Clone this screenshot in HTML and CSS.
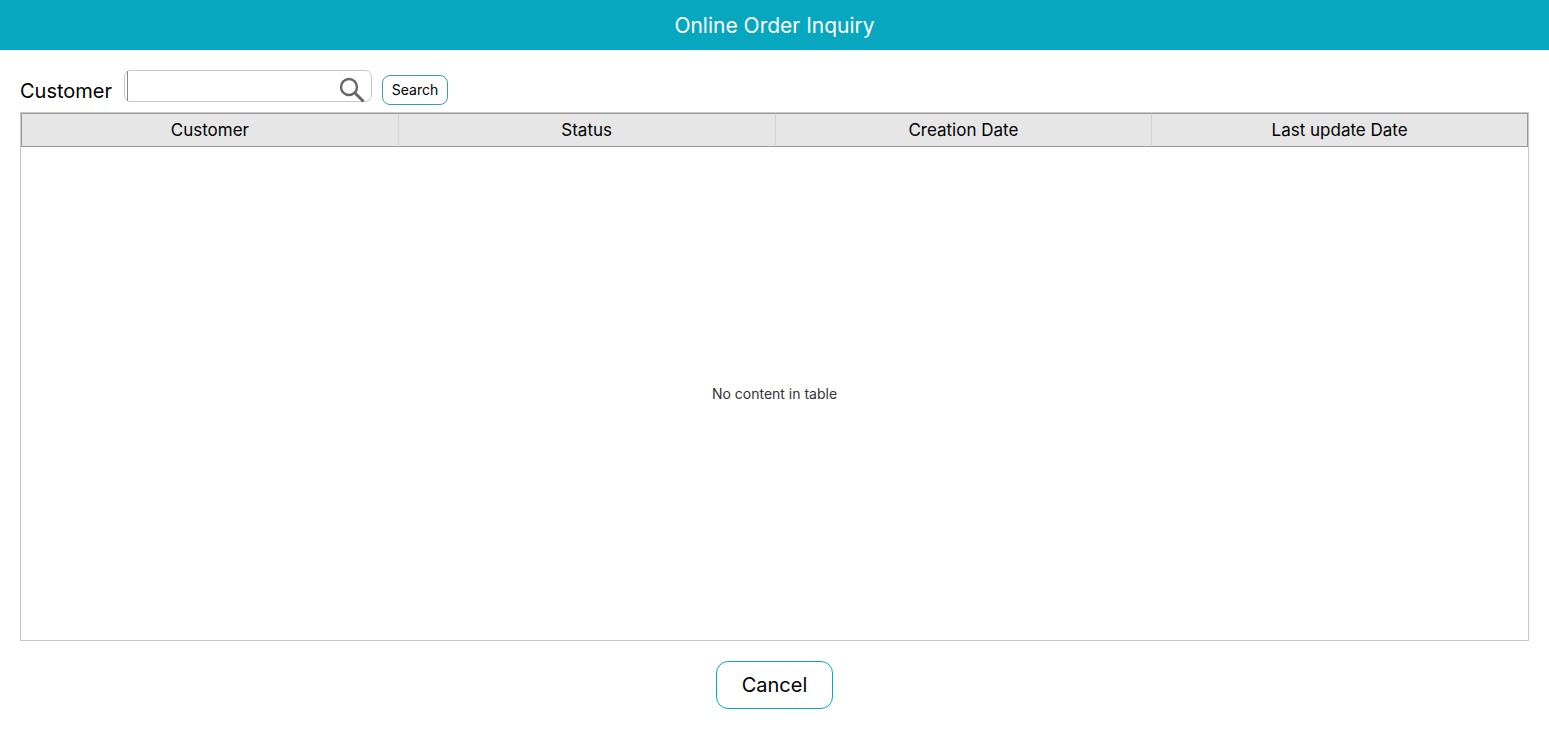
FILE: index.html
```html
<!DOCTYPE html>
<html lang="en">
<head>
    <meta charset="utf-8">
    <title>Online Order Inquiry</title>
    <link rel="stylesheet" href="styles.css">
</head>
<body>
    <header class="title-bar">
        <h1>Online Order Inquiry</h1>
    </header>

    <main class="content">
        <form class="search-row">
            <label for="customer">Customer</label>
            <div class="lookup">
                <input type="text" id="customer" name="customer">
                <button type="button" class="lookup-btn" aria-label="Look up customer">
                    <svg width="26" height="26" viewBox="0 0 26 26" fill="none" stroke="#666">
                        <circle cx="10" cy="10" r="8" stroke-width="2.4"/>
                        <path d="M15.5 15.5L24.5 24.5" stroke-width="3"/>
                    </svg>
                </button>
            </div>
            <button type="submit" class="search-btn">Search</button>
        </form>

        <div class="table-box">
            <table class="orders">
                <thead>
                    <tr>
                        <th>Customer</th>
                        <th>Status</th>
                        <th>Creation Date</th>
                        <th>Last update Date</th>
                    </tr>
                </thead>
                <tbody>
                    <tr>
                        <td colspan="4">No content in table</td>
                    </tr>
                </tbody>
            </table>
        </div>

        <button type="button" class="cancel-btn">Cancel</button>
    </main>
</body>
</html>
```
FILE: styles.css
```css
* { box-sizing: border-box; }
body {
    margin: 0;
    height: 100vh;
    display: flex;
    flex-direction: column;
    font-family: Inter, "Noto Sans", sans-serif;
    color: #000;
    background: #fff;
}
button { font-family: inherit; color: inherit; background: #fff; cursor: pointer; }

.title-bar {
    height: 50px;
    flex-shrink: 0;
    display: flex;
    align-items: center;
    justify-content: center;
    background: #06a7bf;
    color: #fff;
}
.title-bar h1 { margin: 0; font-size: 21px; font-weight: 400; }

.content {
    flex: 1;
    min-height: 0;
    display: flex;
    flex-direction: column;
    padding: 20px 20px 25px;
}

/* customer lookup */
.search-row { display: flex; align-items: flex-start; height: 42px; }
.search-row label { width: 104px; padding-top: 9px; font-size: 20px; line-height: 24px; }
.lookup {
    width: 248px;
    height: 32px;
    display: flex;
    padding-left: 2px;
    border: 1px solid #c8c8cc;
    border-radius: 7px;
}
.lookup input {
    flex: 1;
    min-width: 0;
    padding: 0 6px;
    border: 0;
    border-left: 1px solid #888;
    outline: 0;
    background: transparent;
    font: inherit;
    font-size: 16px;
}
.lookup-btn { padding: 6px 6px 0 0; border: 0; background: none; line-height: 0; }
.lookup-btn svg { display: block; }
.search-btn {
    width: 66px;
    height: 30px;
    margin: 5px 0 0 10px;
    padding: 0 0 1px;
    border: 1px solid #3b9eae;
    border-radius: 8px;
    font-size: 14px;
}

/* results */
.table-box { flex: 1; min-height: 0; border: 1px solid #c8c8c8; }
.orders {
    width: 100%;
    height: 100%;
    table-layout: fixed;
    border-collapse: separate;
    border-spacing: 0;
}
.orders th {
    height: 34px;
    padding: 0;
    background: #e6e6e6;
    border-top: 1px solid #999;
    border-bottom: 1px solid #999;
    border-left: 1px solid #d2d2d2;
    font-size: 17px;
    font-weight: 400;
}
.orders th:first-child { border-left-color: #999; }
.orders th:last-child { border-right: 1px solid #999; }
.orders td { padding: 0; text-align: center; font-size: 14px; color: #333; }

.cancel-btn {
    align-self: center;
    flex-shrink: 0;
    width: 117px;
    height: 48px;
    margin-top: 20px;
    border: 1px solid #06a7bf;
    border-radius: 12px;
    font-size: 20px;
}
```
